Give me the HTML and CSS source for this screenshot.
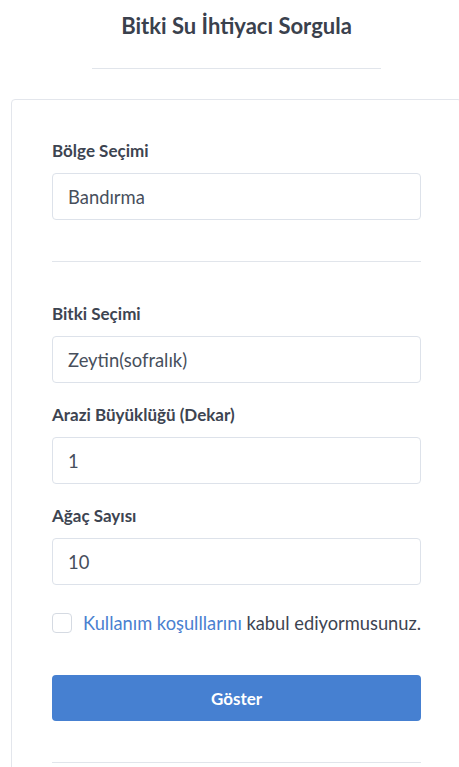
FILE: index.html
```html
<!DOCTYPE html>
<html lang="tr">
<head>
<meta charset="utf-8">
<title>Bitki Su İhtiyacı Sorgula</title>
<link rel="stylesheet" href="styles.css">
</head>
<body>
<div class="page">
  <h1 class="title">Bitki Su İhtiyacı Sorgula</h1>
  <hr class="title-rule">
  <div class="card">
    <div class="group">
      <label class="label">Bölge Seçimi</label>
      <div class="input">Bandırma</div>
    </div>
    <hr class="rule first-rule">
    <div class="group">
      <label class="label">Bitki Seçimi</label>
      <div class="input">Zeytin(sofralık)</div>
    </div>
    <div class="group">
      <label class="label">Arazi Büyüklüğü (Dekar)</label>
      <div class="input">1</div>
    </div>
    <div class="group">
      <label class="label">Ağaç Sayısı</label>
      <div class="input">10</div>
    </div>
    <div class="check-row">
      <span class="checkbox"></span>
      <span class="check-text"><a class="link" href="#">Kullanım koşulllarını</a> kabul ediyormusunuz.</span>
    </div>
    <button class="btn" type="button">Göster</button>
    <hr class="rule last-rule">
  </div>
</div>
</body>
</html>
```
FILE: styles.css
```css
html, body {
  margin: 0;
  padding: 0;
  overflow: hidden;
  background: #ffffff;
}
body {
  font-family: "Source Sans Pro", Lato, "Liberation Sans", sans-serif;
  color: #3d4451;
}
.page {
  width: 473px;
}
.title {
  margin: 0;
  padding-top: 11px;
  height: 30px;
  line-height: 30px;
  text-align: center;
  font-size: 22px;
  font-weight: 700;
  color: #3a414d;
}
.title-rule {
  width: 289px;
  margin: 27px auto 0;
  border: 0;
  border-top: 1px solid #e1e5eb;
  height: 0;
}
.card {
  margin: 30px 0 0 11px;
  width: 451px;
  box-sizing: border-box;
  border: 1px solid #e3e6ec;
  border-radius: 4px;
  padding: 36px 40px 40px;
}
.group {
  display: flex;
  flex-direction: column;
  margin-bottom: 17px;
}
.label {
  display: block;
  height: 24px;
  line-height: 24px;
  padding-top: 3px;
  margin-bottom: 10px;
  font-size: 17px;
  font-weight: 700;
  color: #3d4451;
}
.input {
  box-sizing: border-box;
  height: 47px;
  border: 1px solid #dde2ea;
  border-radius: 4px;
  padding: 1px 15px 0;
  line-height: 45px;
  font-size: 18.4px;
  color: #474f5c;
}
.rule {
  border: 0;
  border-top: 1px solid #e1e5eb;
  height: 0;
  margin: 0;
}
.first-rule {
  margin-top: 41px;
  margin-bottom: 37px;
}
.check-row {
  display: flex;
  align-items: center;
  gap: 11px;
  margin-top: 28px;
  height: 20px;
}
.checkbox {
  box-sizing: border-box;
  width: 20px;
  height: 20px;
  border: 1px solid #d5dae2;
  border-radius: 4px;
  flex: none;
}
.check-text {
  font-size: 18.3px;
  color: #3d4451;
  white-space: nowrap;
}
.link {
  color: #4a80d0;
  text-decoration: none;
}
.btn {
  display: block;
  width: 100%;
  height: 46px;
  margin-top: 42px;
  border: 0;
  border-radius: 4px;
  background: #4680d1;
  color: #ffffff;
  font-family: inherit;
  font-size: 17px;
  font-weight: 700;
}
.last-rule {
  margin-top: 41px;
}
```
